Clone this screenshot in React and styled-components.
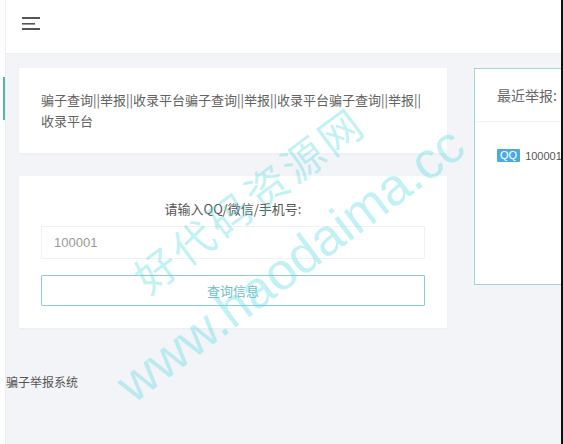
import React from "react";
import styled, { createGlobalStyle } from "styled-components";

const Global = createGlobalStyle`
  html, body { margin: 0; padding: 0; }
  body {
    background: #f3f4f8;
    font-family: "Liberation Sans", "Noto Sans CJK SC", sans-serif;
    overflow: hidden;
  }
`;

const Frame = styled.div`
  position: relative;
  display: flex;
  width: 563px;
  height: 444px;
  overflow: hidden;
  background: #f3f4f8;
`;

const Sidebar = styled.aside`
  width: 5px;
  flex: none;
  background: #fdfdfe;
  border-right: 1px solid #ececf1;
  display: flex;
  flex-direction: column;
  padding-top: 77px;
`;

const ActiveMark = styled.div`
  width: 2px;
  height: 43px;
  margin-left: 3px;
  background: #4fb8a8;
`;

const Main = styled.div`
  flex: 1;
  min-width: 0;
  display: flex;
  flex-direction: column;
`;

const Header = styled.header`
  height: 54px;
  flex: none;
  background: #fff;
  border-bottom: 1px solid #eceef2;
  display: flex;
  align-items: flex-start;
  padding: 17px 0 0 16px;
  box-sizing: border-box;
`;

const Content = styled.div`
  display: grid;
  grid-template-columns: 428px 1fr;
  column-gap: 27px;
  padding: 14px 0 0 13px;
  align-items: start;
`;

const Column = styled.div`
  display: flex;
  flex-direction: column;
  gap: 23px;
`;

const Card = styled.div`
  background: #fff;
  box-shadow: 0 1px 2px rgba(0, 0, 0, 0.03);
  padding: ${(p) => p.$pad};
`;

const Intro = styled.p`
  margin: 0;
  font-size: 13px;
  line-height: 21px;
  color: #626262;
  font-family: "Noto Sans CJK SC", sans-serif;
  word-break: break-all;
`;

const Label = styled.div`
  text-align: center;
  font-size: 13px;
  line-height: 18px;
  color: #555;
  font-family: "Noto Sans CJK SC", sans-serif;
  margin-bottom: 8px;
`;

const Input = styled.div`
  height: 33px;
  box-sizing: border-box;
  border: 1px solid #f1f1f3;
  display: flex;
  align-items: center;
  padding-left: 12px;
  font-size: 13px;
  color: #999;
  margin-bottom: 16px;
`;

const Button = styled.div`
  height: 31px;
  box-sizing: border-box;
  border: 1px solid #8ccdd3;
  border-radius: 1px;
  display: flex;
  align-items: center;
  justify-content: center;
  font-size: 13px;
  color: #6fc0c8;
  font-family: "Noto Sans CJK SC", sans-serif;
`;

const Side = styled.div`
  background: #fff;
  border: 1px solid #9fd4db;
  border-right: none;
  height: 217px;
  box-sizing: border-box;
  display: flex;
  flex-direction: column;
`;

const SideHead = styled.div`
  height: 52px;
  flex: none;
  border-bottom: 1px solid #f1f2f5;
  display: flex;
  align-items: center;
  padding-left: 22px;
  font-size: 14px;
  color: #666;
  font-family: "Noto Sans CJK SC", sans-serif;
  white-space: nowrap;
`;

const SideBody = styled.div`
  padding: 27px 0 0 22px;
  display: flex;
  align-items: center;
  gap: 5px;
  white-space: nowrap;
`;

const Badge = styled.span`
  background: #4ca9e2;
  color: #fff;
  font-size: 11px;
  line-height: 13px;
  padding: 0 3px;
  border-radius: 1px;
`;

const Num = styled.span`
  font-size: 11px;
  color: #555;
`;

const Footer = styled.div`
  margin-top: 46px;
  font-size: 12px;
  color: #555;
  font-family: "Noto Sans CJK SC", sans-serif;
  line-height: 16px;
`;

const Edge = styled.div`
  width: 2px;
  flex: none;
  background: #111;
`;

const Watermark = styled.div`
  position: absolute;
  inset: 0;
  pointer-events: none;
`;

const Mark = styled.span`
  position: absolute;
  left: ${(p) => p.$x}px;
  top: ${(p) => p.$y}px;
  transform: translate(-50%, -50%) rotate(-37deg);
  font-size: ${(p) => p.$size}px;
  font-family: ${(p) => p.$font};
  color: rgba(80, 215, 225, 0.35);
  white-space: nowrap;
  letter-spacing: ${(p) => p.$ls}px;
`;

const Burger = () => (
  <svg width="18" height="14" viewBox="0 0 18 14">
    <rect x="0" y="0" width="18" height="2" fill="#555" />
    <rect x="0" y="6" width="13" height="1.6" fill="#555" />
    <rect x="0" y="11" width="18" height="2" fill="#555" />
  </svg>
);

export default function App() {
  return (
    <>
      <Global />
      <Frame>
        <Sidebar>
          <ActiveMark />
        </Sidebar>
        <Main>
          <Header>
            <Burger />
          </Header>
          <Content>
            <Column>
              <Card $pad="21px 22px 22px 22px">
                <Intro>
                  骗子查询||举报||收录平台骗子查询||举报||收录平台骗子查询||举报||收录平台
                </Intro>
              </Card>
              <Card $pad="24px 22px 22px 22px">
                <Label>请输入QQ/微信/手机号:</Label>
                <Input>100001</Input>
                <Button>查询信息</Button>
              </Card>
            </Column>
            <Side>
              <SideHead>最近举报:</SideHead>
              <SideBody>
                <Badge>QQ</Badge>
                <Num>100001</Num>
              </SideBody>
            </Side>
          </Content>
          <Footer>骗子举报系统</Footer>
        </Main>
        <Edge />
        <Watermark>
          <Mark $x={248} $y={198} $size={42} $ls={4} $font={'"Noto Sans CJK SC", sans-serif'}>
            好代码资源网
          </Mark>
          <Mark $x={290} $y={264} $size={52} $ls={0} $font={'"Liberation Sans", sans-serif'}>
            www.haodaima.cc
          </Mark>
        </Watermark>
      </Frame>
    </>
  );
}
